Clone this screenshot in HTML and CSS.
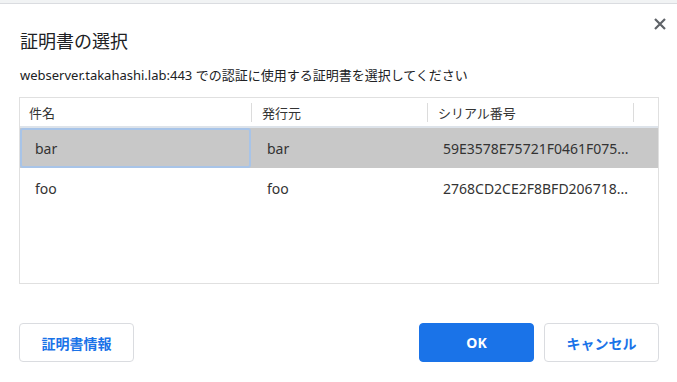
FILE: index.html
```html
<!DOCTYPE html>
<html lang="ja">
<head>
<meta charset="utf-8">
<title>証明書の選択</title>
<link rel="stylesheet" href="styles.css">
</head>
<body>
<div class="topstrip"></div>
<div class="dialog">
  <div class="head">
    <h1 class="title">証明書の選択</h1>
    <button class="close" aria-label="閉じる">
      <svg width="12" height="12" viewBox="0 0 12 12"><path d="M1 1L11 11M11 1L1 11" stroke="#5f6368" stroke-width="2.2" fill="none"/></svg>
    </button>
  </div>
  <p class="subtitle">webserver.takahashi.lab:443 での認証に使用する証明書を選択してください</p>
  <div class="table">
    <div class="row header">
      <div class="cell c1">件名</div>
      <div class="cell c2">発行元</div>
      <div class="cell c3">シリアル番号</div>
      <div class="cell c4"></div>
    </div>
    <div class="row item selected">
      <div class="cell c1 focus">bar</div>
      <div class="cell c2">bar</div>
      <div class="cell c3">59E3578E75721F0461F075...</div>
      <div class="cell c4"></div>
    </div>
    <div class="row item">
      <div class="cell c1">foo</div>
      <div class="cell c2">foo</div>
      <div class="cell c3">2768CD2CE2F8BFD206718...</div>
      <div class="cell c4"></div>
    </div>
  </div>
  <div class="buttons">
    <button class="btn">証明書情報</button>
    <div class="spacer"></div>
    <button class="btn primary">OK</button>
    <button class="btn">キャンセル</button>
  </div>
</div>
</body>
</html>
```
FILE: styles.css
```css
html, body {
  margin: 0;
  padding: 0;
  background: #ffffff;
}
body {
  font-family: "Noto Sans", "Noto Sans CJK JP", sans-serif;
  color: #202124;
  width: 677px;
  height: 382px;
  overflow: hidden;
}
.topstrip {
  height: 3px;
  background: #f1f3f4;
  border-bottom: 1px solid #dadce0;
}
.dialog {
  padding: 0 18px 0 19px;
}
.head {
  display: flex;
  justify-content: space-between;
  align-items: flex-start;
}
.title {
  margin: 24px 0 0 1px;
  font-size: 18px;
  line-height: 24px;
  font-weight: normal;
  font-family: "Noto Sans CJK JP", sans-serif;
  color: #202124;
}
.close {
  margin: 14px -7px 0 0;
  padding: 0;
  border: 0;
  background: none;
  width: 12px;
  height: 12px;
  display: flex;
}
.subtitle {
  margin: 14px 0 0 1px;
  font-size: 13px;
  line-height: 18px;
  color: #202124;
}
.table {
  margin-top: 13px;
  border: 1px solid #e0e0e0;
  height: 185px;
  font-size: 13px;
  color: #333333;
}
.row {
  display: grid;
  grid-template-columns: 231px 176px 206px 1fr;
}
.header {
  height: 28px;
  border-bottom: 2px solid #dde3ea;
}
.header .cell {
  display: flex;
  align-items: center;
  padding-left: 9px;
  font-family: "Noto Sans CJK JP", sans-serif;
  position: relative;
}
.header .c2, .header .c3, .header .c4 {
  border-left: 1px solid #dcdcdc;
  margin: 5px 0 4px 0;
  padding-left: 10px;
}
.item {
  height: 40px;
}
.item .cell {
  display: flex;
  align-items: center;
  padding-left: 16px;
  font-size: 14px;
  white-space: nowrap;
}
.item .c1 {
  padding-left: 15px;
}
.selected {
  background: #c8c8c8;
}
.focus {
  box-shadow: inset 0 0 0 2px #a8c4e8;
  border-radius: 3px;
}
.buttons {
  display: flex;
  margin-top: 39px;
  gap: 10px;
}
.spacer {
  flex: 1;
}
.btn {
  width: 115px;
  height: 39px;
  border: 1px solid #dadce0;
  border-radius: 4px;
  background: #ffffff;
  color: #1a73e8;
  font-family: "Noto Sans", "Noto Sans CJK JP", sans-serif;
  font-size: 14px;
  font-weight: 600;
  padding: 0;
}
.primary {
  background: #1a73e8;
  border-color: #1a73e8;
  color: #ffffff;
  font-weight: 700;
}
```
